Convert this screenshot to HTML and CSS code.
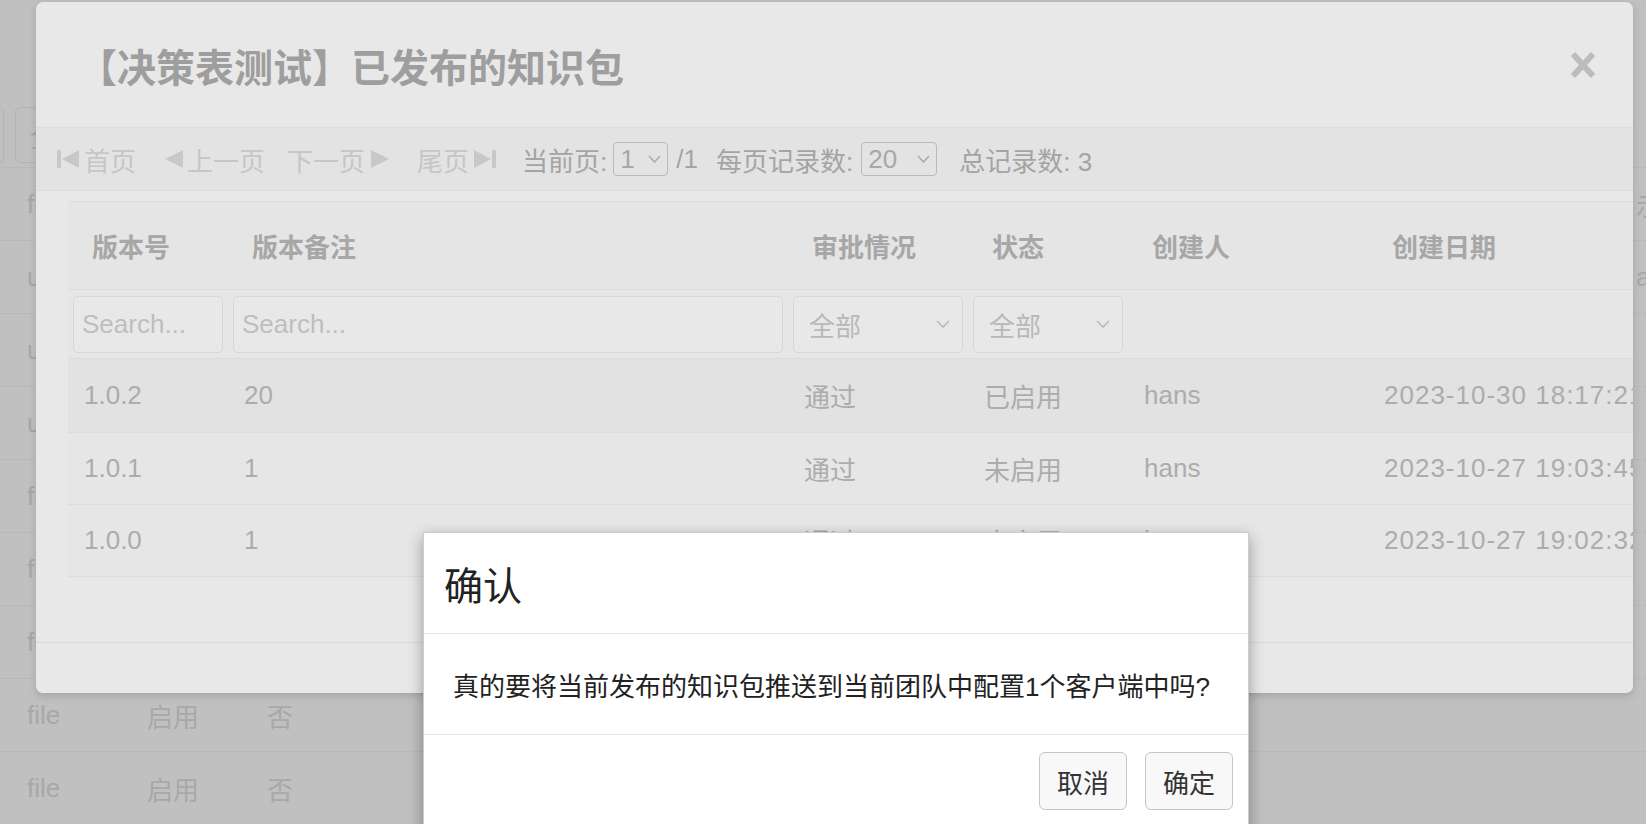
FILE: index.html
```html
<!DOCTYPE html>
<html lang="zh-CN">
<head>
    <meta charset="UTF-8">
    <title>已发布的知识包</title>
    <link rel="stylesheet" href="styles.css">
</head>
<body>
    <!-- pagina de fondo -->
    <div class="page">
        <div class="page-toolbar">
            <span class="page-box page-box-a"></span>
            <span class="page-box page-box-b">全部</span>
        </div>
        <div class="page-row"><span class="pc">file</span><span class="pc"></span><span class="pc"></span><span class="pc-fill"></span><span class="pc-end">示例</span></div>
        <div class="page-row"><span class="pc">url</span><span class="pc"></span><span class="pc"></span><span class="pc-fill"></span><span class="pc-end">abc</span></div>
        <div class="page-row"><span class="pc">url</span><span class="pc"></span><span class="pc"></span><span class="pc-fill"></span><span class="pc-end"></span></div>
        <div class="page-row"><span class="pc">url</span><span class="pc"></span><span class="pc"></span><span class="pc-fill"></span><span class="pc-end"></span></div>
        <div class="page-row"><span class="pc">file</span><span class="pc"></span><span class="pc"></span><span class="pc-fill"></span><span class="pc-end"></span></div>
        <div class="page-row"><span class="pc">file</span><span class="pc"></span><span class="pc"></span><span class="pc-fill"></span><span class="pc-end"></span></div>
        <div class="page-row"><span class="pc">file</span><span class="pc"></span><span class="pc"></span><span class="pc-fill"></span><span class="pc-end"></span></div>
        <div class="page-row"><span class="pc">file</span><span class="pc">启用</span><span class="pc">否</span><span class="pc-fill"></span><span class="pc-end"></span></div>
        <div class="page-row"><span class="pc">file</span><span class="pc">启用</span><span class="pc">否</span><span class="pc-fill"></span><span class="pc-end"></span></div>
    </div>

    <!-- ventana de paquetes publicados -->
    <div class="modal">
        <div class="modal-header">
            <h4 class="modal-title">【决策表测试】已发布的知识包</h4>
            <svg class="close" width="26" height="28" viewBox="0 0 26 28"><path d="M3 3 L23 25 M23 3 L3 25" stroke="#bcbcbc" stroke-width="6" fill="none"/></svg>
        </div>

        <div class="pager">
            <span class="nav nav-first">
                <svg width="24" height="20" viewBox="0 0 24 20"><rect x="1" y="1" width="4" height="18" fill="#c8c8c8"/><polygon points="23,1 23,19 6,10" fill="#c8c8c8"/></svg>首页
            </span>
            <span class="nav nav-prev">
                <svg width="21" height="20" viewBox="0 0 21 20"><polygon points="20,1 20,19 2,10" fill="#c8c8c8"/></svg>上一页
            </span>
            <span class="nav nav-next">
                下一页<svg width="21" height="20" viewBox="0 0 21 20"><polygon points="1,1 1,19 19,10" fill="#c8c8c8"/></svg>
            </span>
            <span class="nav nav-last">
                尾页<svg width="24" height="20" viewBox="0 0 24 20"><polygon points="1,1 1,19 18,10" fill="#c8c8c8"/><rect x="19" y="1" width="4" height="18" fill="#c8c8c8"/></svg>
            </span>
            <span class="label label-page">当前页:</span>
            <span class="pick pick-page">1<svg width="13" height="8" viewBox="0 0 13 8"><path d="M1 1 L6.5 7 L12 1" stroke="#a8a8a8" stroke-width="1.4" fill="none"/></svg></span>
            <span class="label label-total">/1</span>
            <span class="label">每页记录数:</span>
            <span class="pick pick-size">20<svg width="13" height="8" viewBox="0 0 13 8"><path d="M1 1 L6.5 7 L12 1" stroke="#a8a8a8" stroke-width="1.4" fill="none"/></svg></span>
            <span class="label label-count">总记录数: 3</span>
        </div>

        <div class="modal-body">
            <div class="grid">
                <div class="grid-row grid-head">
                    <div class="th">版本号</div>
                    <div class="th">版本备注</div>
                    <div class="th">审批情况</div>
                    <div class="th">状态</div>
                    <div class="th">创建人</div>
                    <div class="th">创建日期</div>
                </div>
                <div class="grid-row grid-filter">
                    <div class="fc"><span class="search">Search...</span></div>
                    <div class="fc"><span class="search">Search...</span></div>
                    <div class="fc"><span class="choose">全部<svg width="14" height="8" viewBox="0 0 14 8"><path d="M1 1 L7 7 L13 1" stroke="#b5b5b5" stroke-width="1.4" fill="none"/></svg></span></div>
                    <div class="fc"><span class="choose">全部<svg width="14" height="8" viewBox="0 0 14 8"><path d="M1 1 L7 7 L13 1" stroke="#b5b5b5" stroke-width="1.4" fill="none"/></svg></span></div>
                    <div class="fc"></div>
                    <div class="fc"></div>
                </div>
                <div class="grid-row row-active">
                    <div class="td">1.0.2</div>
                    <div class="td">20</div>
                    <div class="td">通过</div>
                    <div class="td">已启用</div>
                    <div class="td">hans</div>
                    <div class="td date">2023-10-30 18:17:21</div>
                </div>
                <div class="grid-row">
                    <div class="td">1.0.1</div>
                    <div class="td">1</div>
                    <div class="td">通过</div>
                    <div class="td">未启用</div>
                    <div class="td">hans</div>
                    <div class="td date">2023-10-27 19:03:45</div>
                </div>
                <div class="grid-row">
                    <div class="td">1.0.0</div>
                    <div class="td">1</div>
                    <div class="td">通过</div>
                    <div class="td">未启用</div>
                    <div class="td">hans</div>
                    <div class="td date">2023-10-27 19:02:32</div>
                </div>
            </div>
        </div>

        <div class="modal-footer"></div>
    </div>

    <!-- confirmacion -->
    <div class="confirm">
        <div class="confirm-header">
            <h4 class="confirm-title">确认</h4>
        </div>
        <div class="confirm-body">真的要将当前发布的知识包推送到当前团队中配置1个客户端中吗?</div>
        <div class="confirm-footer">
            <button class="btn">取消</button>
            <button class="btn">确定</button>
        </div>
    </div>
</body>
</html>
```

FILE: styles.css
```css
html, body {
    margin: 0;
    padding: 0;
    height: 100%;
    overflow: hidden;
}

body {
    font-family: "Liberation Sans", "Noto Sans CJK SC", sans-serif;
    background-color: #c0c0c0;
    position: relative;
}

/* pagina de fondo */
.page {
    color: #a8a8a8;
    font-size: 26px;
}

.page-toolbar {
    height: 168px;
    box-sizing: border-box;
    padding-top: 107px;
    display: flex;
    border-bottom: 1px solid #b9b9b9;
}

.page-box {
    height: 56px;
    box-sizing: border-box;
    border: 1px solid #b3b3b3;
    border-radius: 5px;
    display: flex;
    align-items: center;
}

.page-box-a {
    width: 34px;
    margin-left: -30px;
}

.page-box-b {
    width: 120px;
    margin-left: 11px;
    padding-left: 14px;
}

.page-row {
    height: 73px;
    box-sizing: border-box;
    border-bottom: 1px solid #b9b9b9;
    display: flex;
    align-items: center;
    padding-left: 27px;
    white-space: nowrap;
}

.pc {
    width: 120px;
}

.pc-fill {
    flex: 1;
}

.pc-end {
    width: 10px;
    overflow: hidden;
}

/* ventana principal */
.modal {
    position: absolute;
    left: 36px;
    top: 2px;
    width: 1597px;
    height: 691px;
    background-color: #e8e8e8;
    border-radius: 7px;
    overflow: hidden;
    box-shadow: 0 3px 9px rgba(0, 0, 0, 0.15);
    display: flex;
    flex-direction: column;
}

.modal-header {
    height: 126px;
    box-sizing: border-box;
    border-bottom: 1px solid #dcdcdc;
    display: flex;
    align-items: center;
    justify-content: space-between;
    padding: 0 37px 0 42px;
    flex-shrink: 0;
}

.modal-title {
    margin: 0;
    font-size: 39px;
    font-weight: 700;
    color: #9e9e9e;
}

.pager {
    height: 63px;
    box-sizing: border-box;
    background-color: #e3e3e3;
    border-bottom: 1px solid #dadada;
    display: flex;
    align-items: center;
    padding-left: 20px;
    font-size: 26px;
    white-space: nowrap;
    flex-shrink: 0;
}

.nav {
    display: flex;
    align-items: center;
    color: #c6c6c6;
}

.nav-first svg {
    margin-right: 4px;
}

.nav-prev {
    margin-left: 27px;
}

.nav-prev svg {
    margin-right: 3px;
}

.nav-next {
    margin-left: 22px;
}

.nav-next svg {
    margin-left: 5px;
}

.nav-last {
    margin-left: 26px;
}

.nav-last svg {
    margin-left: 4px;
}

.label {
    color: #a4a4a4;
}

.label-page {
    margin-left: 25px;
}

.label-total {
    margin: 0 18px 0 8px;
}

.label-count {
    margin-left: 22px;
}

.pick {
    height: 34px;
    box-sizing: border-box;
    border: 1px solid #bababa;
    border-radius: 4px;
    display: flex;
    align-items: center;
    justify-content: space-between;
    padding: 0 6px 0 6px;
    color: #a8a8a8;
    margin-left: 6px;
}

.pick-page {
    width: 55px;
}

.pick-size {
    width: 76px;
    margin-left: 8px;
}

.modal-body {
    flex: 1;
    padding: 10px 0 0 32px;
    overflow: hidden;
}

.modal-footer {
    height: 50px;
    border-top: 1px solid #dadada;
    flex-shrink: 0;
}

/* tabla */
.grid {
    width: 1600px;
    background-color: #e6e6e6;
    border-top: 1px solid #dcdcdc;
    font-size: 26px;
}

.grid-row {
    display: grid;
    grid-template-columns: 160px 560px 180px 160px 240px 300px;
    align-items: center;
    box-sizing: border-box;
    border-bottom: 1px solid #dcdcdc;
    height: 72px;
    white-space: nowrap;
}

.grid-head {
    height: 88px;
    background-color: #e5e5e5;
}

.grid-filter {
    height: 69px;
}

.th {
    padding-left: 24px;
    font-weight: 700;
    color: #a7a7a7;
}

.td {
    padding-left: 16px;
    color: #acacac;
}

.date {
    letter-spacing: 1px;
}

.row-active {
    height: 74px;
    background-color: #e2e2e2;
}

.fc {
    padding: 0 5px;
}

.search, .choose {
    height: 57px;
    box-sizing: border-box;
    border: 1px solid #d7d7d7;
    border-radius: 5px;
    background-color: #e8e8e8;
    display: flex;
    align-items: center;
    color: #bebebe;
}

.search {
    padding-left: 8px;
}

.choose {
    padding: 0 12px 0 15px;
    justify-content: space-between;
    color: #b8b8b8;
}

/* confirmacion */
.confirm {
    position: absolute;
    left: 423px;
    top: 532px;
    width: 826px;
    height: 330px;
    background-color: #fff;
    border: 1px solid rgba(0, 0, 0, 0.2);
    box-sizing: border-box;
    border-radius: 2px;
    box-shadow: 0 5px 15px rgba(0, 0, 0, 0.35);
    color: #222;
}

.confirm-header {
    height: 101px;
    box-sizing: border-box;
    border-bottom: 1px solid #e5e5e5;
    display: flex;
    align-items: center;
    padding-left: 20px;
}

.confirm-title {
    margin: 0;
    font-size: 39px;
    font-weight: 400;
}

.confirm-body {
    height: 101px;
    box-sizing: border-box;
    border-bottom: 1px solid #e5e5e5;
    display: flex;
    align-items: center;
    padding-left: 29px;
    font-size: 26px;
}

.confirm-footer {
    display: flex;
    justify-content: flex-end;
    gap: 18px;
    padding: 17px 15px 0 0;
}

.btn {
    width: 88px;
    height: 58px;
    font-family: inherit;
    font-size: 26px;
    color: #333;
    background-color: #f8f8f8;
    border: 1px solid #c6c6c6;
    border-radius: 6px;
    padding: 0;
}
```
